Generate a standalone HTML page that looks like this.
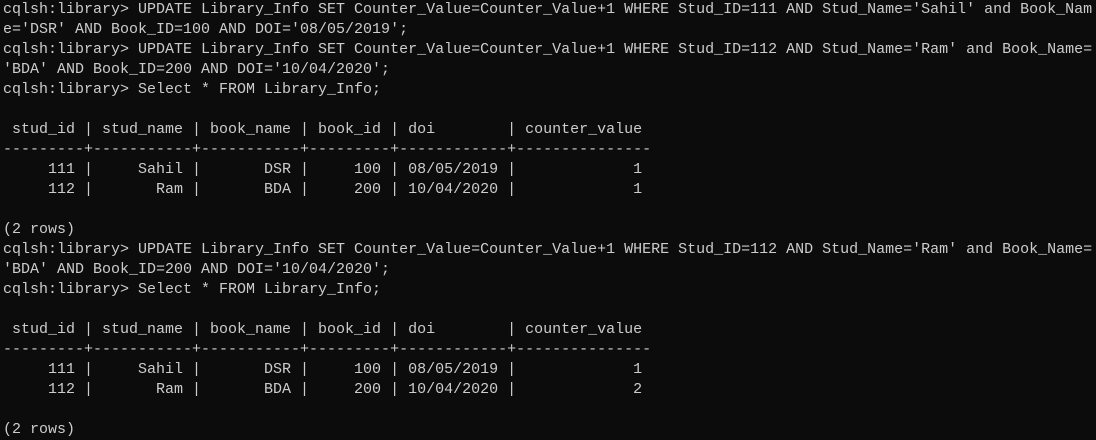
<!DOCTYPE html>
<html><head><style>
html,body{margin:0;padding:0;background:#0c0c0c;width:1096px;height:440px;overflow:hidden}
pre{margin:0;padding:0 0 0 3px;font-family:"Liberation Mono",monospace;font-size:15px;line-height:20px;color:#cccccc;letter-spacing:0;position:absolute;top:0px;left:0}
</style></head><body><pre>cqlsh:library&gt; UPDATE Library_Info SET Counter_Value=Counter_Value+1 WHERE Stud_ID=111 AND Stud_Name='Sahil' and Book_Nam
e='DSR' AND Book_ID=100 AND DOI='08/05/2019';
cqlsh:library&gt; UPDATE Library_Info SET Counter_Value=Counter_Value+1 WHERE Stud_ID=112 AND Stud_Name='Ram' and Book_Name=
'BDA' AND Book_ID=200 AND DOI='10/04/2020';
cqlsh:library&gt; Select * FROM Library_Info;

 stud_id | stud_name | book_name | book_id | doi        | counter_value
---------+-----------+-----------+---------+------------+---------------
     111 |     Sahil |       DSR |     100 | 08/05/2019 |             1
     112 |       Ram |       BDA |     200 | 10/04/2020 |             1

(2 rows)
cqlsh:library&gt; UPDATE Library_Info SET Counter_Value=Counter_Value+1 WHERE Stud_ID=112 AND Stud_Name='Ram' and Book_Name=
'BDA' AND Book_ID=200 AND DOI='10/04/2020';
cqlsh:library&gt; Select * FROM Library_Info;

 stud_id | stud_name | book_name | book_id | doi        | counter_value
---------+-----------+-----------+---------+------------+---------------
     111 |     Sahil |       DSR |     100 | 08/05/2019 |             1
     112 |       Ram |       BDA |     200 | 10/04/2020 |             2

(2 rows)</pre></body></html>
